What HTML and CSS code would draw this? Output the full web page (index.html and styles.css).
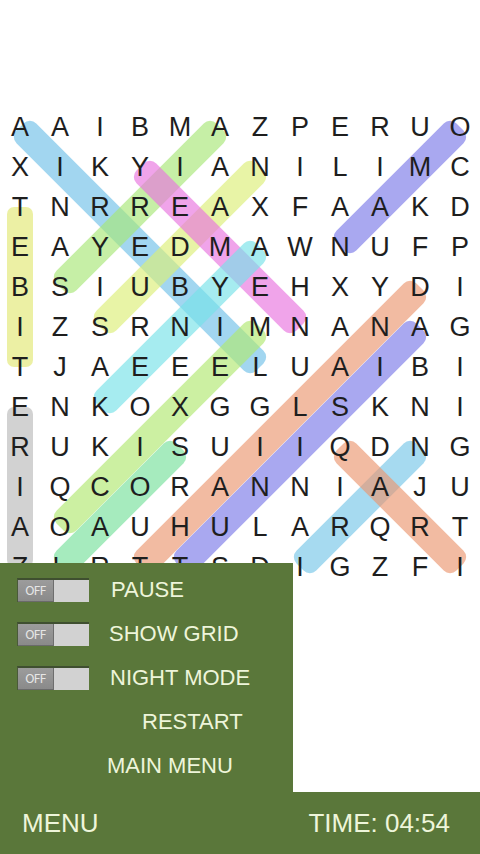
FILE: index.html
```html
<!DOCTYPE html>
<html>
<head>
<meta charset="utf-8">
<link rel="stylesheet" href="styles.css">
</head>
<body>
<div class="screen">
  <main class="board">
    <svg class="marks" width="480" height="480" viewBox="0 0 480 480">
      <rect class="m-blue" x="0" y="-14" width="339.4" height="28" rx="9" transform="translate(20 20) rotate(45)"/>
      <rect class="m-green" x="0" y="-14" width="226.3" height="28" rx="9" transform="translate(220 20) rotate(135)"/>
      <rect class="m-yellow" x="0" y="-14" width="226.3" height="28" rx="9" transform="translate(260 60) rotate(135)"/>
      <rect class="m-pink" x="0" y="-14" width="226.3" height="28" rx="9" transform="translate(140 60) rotate(45)"/>
      <rect class="m-yellow2" x="0" y="-13" width="160" height="26" rx="7" transform="translate(20 100) rotate(90)"/>
      <rect class="m-gray" x="0" y="-13" width="160" height="26" rx="7" transform="translate(20 300) rotate(90)"/>
      <rect class="m-cyan" x="0" y="-14" width="226.3" height="28" rx="9" transform="translate(260 140) rotate(135)"/>
      <rect class="m-lime" x="0" y="-14" width="282.8" height="28" rx="9" transform="translate(260 220) rotate(135)"/>
      <rect class="m-mint" x="0" y="-14" width="169.7" height="28" rx="9" transform="translate(180 340) rotate(135)"/>
      <rect class="m-salmon" x="0" y="-14" width="396" height="28" rx="9" transform="translate(420 180) rotate(135)"/>
      <rect class="m-purple" x="0" y="-14" width="339.4" height="28" rx="9" transform="translate(420 220) rotate(135)"/>
      <rect class="m-purple" x="0" y="-14" width="169.7" height="28" rx="9" transform="translate(460 20) rotate(135)"/>
      <rect class="m-sky" x="0" y="-14" width="169.7" height="28" rx="9" transform="translate(420 340) rotate(135)"/>
      <rect class="m-salmon" x="0" y="-14" width="169.7" height="28" rx="9" transform="translate(340 340) rotate(45)"/>
    </svg>
    <div class="grid">
      <span>A</span><span>A</span><span>I</span><span>B</span><span>M</span><span>A</span><span>Z</span><span>P</span><span>E</span><span>R</span><span>U</span><span>O</span>
      <span>X</span><span>I</span><span>K</span><span>Y</span><span>I</span><span>A</span><span>N</span><span>I</span><span>L</span><span>I</span><span>M</span><span>C</span>
      <span>T</span><span>N</span><span>R</span><span>R</span><span>E</span><span>A</span><span>X</span><span>F</span><span>A</span><span>A</span><span>K</span><span>D</span>
      <span>E</span><span>A</span><span>Y</span><span>E</span><span>D</span><span>M</span><span>A</span><span>W</span><span>N</span><span>U</span><span>F</span><span>P</span>
      <span>B</span><span>S</span><span>I</span><span>U</span><span>B</span><span>Y</span><span>E</span><span>H</span><span>X</span><span>Y</span><span>D</span><span>I</span>
      <span>I</span><span>Z</span><span>S</span><span>R</span><span>N</span><span>I</span><span>M</span><span>N</span><span>A</span><span>N</span><span>A</span><span>G</span>
      <span>T</span><span>J</span><span>A</span><span>E</span><span>E</span><span>E</span><span>L</span><span>U</span><span>A</span><span>I</span><span>B</span><span>I</span>
      <span>E</span><span>N</span><span>K</span><span>O</span><span>X</span><span>G</span><span>G</span><span>L</span><span>S</span><span>K</span><span>N</span><span>I</span>
      <span>R</span><span>U</span><span>K</span><span>I</span><span>S</span><span>U</span><span>I</span><span>I</span><span>Q</span><span>D</span><span>N</span><span>G</span>
      <span>I</span><span>Q</span><span>C</span><span>O</span><span>R</span><span>A</span><span>N</span><span>N</span><span>I</span><span>A</span><span>J</span><span>U</span>
      <span>A</span><span>O</span><span>A</span><span>U</span><span>H</span><span>U</span><span>L</span><span>A</span><span>R</span><span>Q</span><span>R</span><span>T</span>
      <span>Z</span><span>L</span><span>R</span><span>T</span><span>T</span><span>S</span><span>D</span><span>I</span><span>G</span><span>Z</span><span>F</span><span>I</span>
    </div>
  </main>

  <div class="menu-panel">
    <div class="menu-row">
      <div class="toggle"><span class="knob">OFF</span></div>
      <span class="label">PAUSE</span>
    </div>
    <div class="menu-row">
      <div class="toggle"><span class="knob">OFF</span></div>
      <span class="label label-grid">SHOW GRID</span>
    </div>
    <div class="menu-row">
      <div class="toggle"><span class="knob">OFF</span></div>
      <span class="label label-night">NIGHT MODE</span>
    </div>
    <div class="menu-row row-restart">
      <span class="label">RESTART</span>
    </div>
    <div class="menu-row row-main">
      <span class="label">MAIN MENU</span>
    </div>
  </div>

  <footer class="bar">
    <span class="bar-text">MENU</span>
    <span class="bar-text">TIME: 04:54</span>
  </footer>
</div>
</body>
</html>
```

FILE: styles.css
```css
html, body {
  margin: 0;
  padding: 0;
  background: #ffffff;
}

.screen {
  position: relative;
  width: 480px;
  height: 854px;
  display: flex;
  flex-direction: column;
  overflow: hidden;
  font-family: "Liberation Sans", Arial, sans-serif;
}

.board {
  position: relative;
  flex: 1;
  padding-top: 107px;
}

.grid {
  position: relative;
  z-index: 1;
  display: grid;
  grid-template-columns: repeat(12, 40px);
  grid-auto-rows: 40px;
}

.grid span {
  display: block;
  text-align: center;
  line-height: 40px;
  font-size: 27px;
  color: #1e1e1e;
}

.marks {
  position: absolute;
  top: 107px;
  left: 0;
  z-index: 0;
  pointer-events: none;
}

.marks rect {
  fill-opacity: 0.65;
}

.m-blue { fill: rgb(112, 192, 232); }
.m-green { fill: rgb(167, 230, 118); }
.m-yellow { fill: rgb(220, 238, 118); }
.m-pink { fill: rgb(232, 115, 223); }
.m-yellow2 { fill: rgb(226, 232, 115); }
.m-gray { fill: rgb(186, 186, 186); }
.m-cyan { fill: rgb(118, 226, 232); }
.m-lime { fill: rgb(177, 232, 112); }
.m-mint { fill: rgb(118, 224, 155); }
.m-salmon { fill: rgb(235, 150, 112); }
.m-purple { fill: rgb(123, 121, 232); }
.m-sky { fill: rgb(118, 198, 232); }

.menu-panel {
  position: absolute;
  z-index: 2;
  left: 0;
  bottom: 62px;
  width: 293px;
  height: 229px;
  box-sizing: border-box;
  padding-top: 5px;
  background: #5a773a;
  display: flex;
  flex-direction: column;
}

.menu-row {
  height: 44px;
  display: flex;
  align-items: center;
}

.toggle {
  margin-left: 17px;
  width: 72px;
  height: 24px;
  box-sizing: border-box;
  background: #d2d2d2;
  border-top: 2px solid #3f4f30;
  border-left: 1px solid #4a5a3a;
  display: flex;
}

.knob {
  width: 36px;
  height: 100%;
  box-sizing: border-box;
  background: linear-gradient(#9c9c9c, #8a8a8a);
  border-right: 1px solid #6e6e6e;
  border-bottom: 1px solid #6a6a6a;
  color: #e6e6e6;
  font-size: 13px;
  line-height: 21px;
  letter-spacing: -0.8px;
  text-align: center;
  font-family: "DejaVu Sans Condensed", "Liberation Sans", sans-serif;
}

.label {
  margin-left: 22px;
  font-size: 22px;
  color: #eef5da;
}

.label-grid {
  margin-left: 20px;
}

.label-night {
  margin-left: 21px;
}

.row-restart .label {
  margin-left: 142px;
}

.row-main .label {
  margin-left: 107px;
}

.bar {
  height: 62px;
  flex: none;
  background: #5a773a;
  display: flex;
  justify-content: space-between;
  align-items: center;
  padding: 0 30px 0 22px;
}

.bar-text {
  font-size: 26px;
  color: #eef5da;
}
```
